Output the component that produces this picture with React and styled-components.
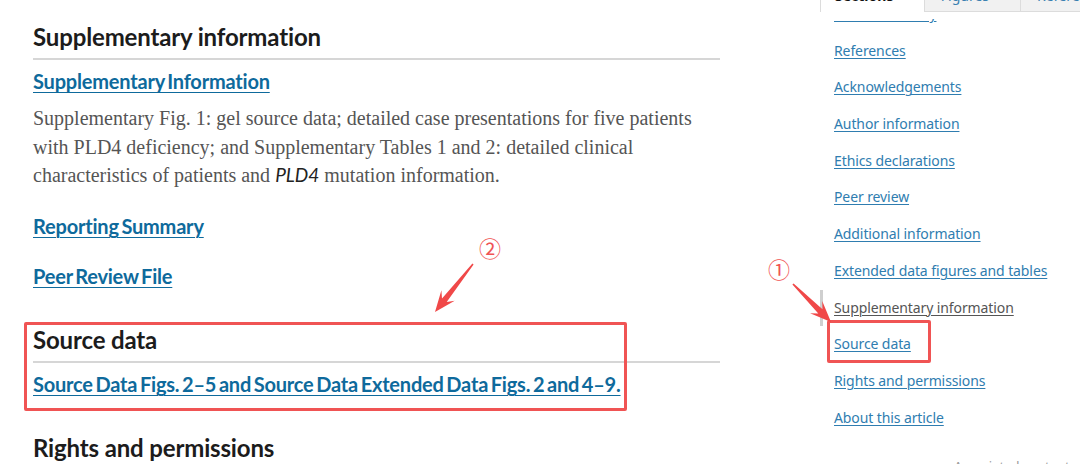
import React from "react";
import styled, { createGlobalStyle } from "styled-components";

const Global = createGlobalStyle`
  html, body { margin: 0; padding: 0; background: #fff; }
  body { width: 1080px; height: 464px; overflow: hidden; }
`;

const Page = styled.div`
  position: relative;
  display: flex;
  width: 1080px;
  height: 464px;
  overflow: hidden;
  background: #fff;
`;

const Main = styled.main`
  width: 687px;
  padding: 23px 0 0 33px;
  display: flex;
  flex-direction: column;
`;

const Heading = styled.h2`
  margin: ${(p) => p.$mt || 0}px 0 0;
  padding: 0 0 7px;
  font-family: Lato, "Liberation Sans", sans-serif;
  font-weight: 700;
  font-size: 24px;
  line-height: 28px;
  color: #1c1c1c;
  letter-spacing: -0.15px;
  border-bottom: ${(p) => (p.$rule ? "2px solid #d6d6d6" : "none")};
`;

const FileLink = styled.a`
  display: block;
  margin-top: ${(p) => p.$mt}px;
  font-family: Lato, "Liberation Sans", sans-serif;
  font-weight: 700;
  font-size: 20px;
  line-height: 24px;
  color: #0e6a9c;
  text-decoration: underline;
  text-decoration-thickness: 1px;
  text-underline-offset: 3px;
  letter-spacing: -0.2px;
  word-spacing: -2px;
  cursor: pointer;
`;

const Desc = styled.p`
  margin: 11px 0 0;
  font-family: "Liberation Serif", "DejaVu Serif", serif;
  font-size: 20px;
  line-height: 28.6px;
  color: #555;
  width: 680px;
`;

const Gene = styled.em`
  font-family: Lato, "Liberation Sans", sans-serif;
  font-style: italic;
  font-weight: 400;
  font-size: 19px;
  color: #222;
`;

const SourceSection = styled.section`
  position: relative;
  margin-top: 38px;
`;

const HighlightBox = styled.div`
  position: absolute;
  left: ${(p) => p.$l}px;
  top: ${(p) => p.$t}px;
  width: ${(p) => p.$w}px;
  height: ${(p) => p.$h}px;
  border: 3px solid #f05454;
  box-sizing: border-box;
  border-radius: 2px;
  pointer-events: none;
`;

const Aside = styled.aside`
  position: relative;
  margin-left: 100px;
  width: 260px;
`;

const TabsCover = styled.div`
  position: absolute;
  top: -18px;
  left: 0;
  right: 0;
  height: 37px;
  z-index: 2;
  background: #fff;
`;

const Tabs = styled.div`
  display: flex;
  height: 30px;
`;

const Tab = styled.div`
  box-sizing: border-box;
  width: ${(p) => p.$w}px;
  height: 30px;
  padding: 4px 0 0 ${(p) => (p.$active ? 14 : 16)}px;
  font-family: "Noto Sans", "Open Sans", sans-serif;
  font-size: 14px;
  font-weight: ${(p) => (p.$active ? 700 : 400)};
  color: ${(p) => (p.$active ? "#111" : "#3a80b0")};
  background: ${(p) => (p.$active ? "#fff" : "#f1f1f1")};
  border-left: 1px solid #dcdcdc;
  border-bottom: ${(p) => (p.$active ? "none" : "1px solid #dcdcdc")};
`;

const NavList = styled.ul`
  list-style: none;
  margin: -4px 0 0;
  padding: 0;
`;

const NavItem = styled.li`
  box-sizing: border-box;
  height: 36.7px;
  padding: 8px 0 0 11px;
  border-left: 3px solid ${(p) => (p.$active ? "#cfcfcf" : "transparent")};
`;

const NavLink = styled.a`
  font-family: "Noto Sans", "Open Sans", sans-serif;
  font-size: 14px;
  line-height: 20px;
  color: ${(p) => (p.$active ? "#555" : "#2f7db0")};
  text-decoration: underline;
  text-decoration-thickness: 1px;
  text-underline-offset: 2px;
  letter-spacing: -0.1px;
  white-space: nowrap;
  cursor: pointer;
`;

const Faint = styled.div`
  margin: 21px 0 0 134px;
  font-family: "Noto Sans", sans-serif;
  font-size: 13px;
  line-height: 18px;
  color: #999;
`;

const Marker = styled.span`
  position: absolute;
  left: ${(p) => p.$x}px;
  top: ${(p) => p.$y}px;
  font-family: "Noto Sans CJK SC", "DejaVu Sans", sans-serif;
  font-size: 22px;
  line-height: 24px;
  color: #f05454;
  pointer-events: none;
`;

const Overlay = styled.svg`
  position: absolute;
  left: 0;
  top: 0;
  pointer-events: none;
`;

function arrowPoints(sx, sy, ex, ey) {
  const dx = ex - sx;
  const dy = ey - sy;
  const len = Math.hypot(dx, dy);
  const ux = dx / len;
  const uy = dy / len;
  const nx = -uy;
  const ny = ux;
  const headLen = 21;
  const neckLen = 15;
  const headW = 8.5;
  const pt = (d, w) => [sx + ux * d + nx * w, sy + uy * d + ny * w];
  const pts = [
    pt(0, 0.8),
    pt(len - neckLen, 3),
    pt(len - headLen, headW),
    pt(len, 0),
    pt(len - headLen, -headW),
    pt(len - neckLen, -3),
    pt(0, -0.8),
  ];
  return pts.map((p) => p.map((v) => v.toFixed(1)).join(",")).join(" ");
}

const navItems = [
  "Data availability",
  "References",
  "Acknowledgements",
  "Author information",
  "Ethics declarations",
  "Peer review",
  "Additional information",
  "Extended data figures and tables",
  "Supplementary information",
  "Source data",
  "Rights and permissions",
  "About this article",
];

export default function App() {
  return (
    <>
      <Global />
      <Page>
        <Main>
          <Heading $rule>Supplementary information</Heading>
          <FileLink $mt={9}>Supplementary Information</FileLink>
          <Desc>
            Supplementary Fig. 1: gel source data; detailed case presentations for five patients
            with PLD4 deficiency; and Supplementary Tables 1 and 2: detailed clinical
            characteristics of patients and <Gene>PLD4</Gene> mutation information.
          </Desc>
          <FileLink $mt={24}>Reporting Summary</FileLink>
          <FileLink $mt={26}>Peer Review File</FileLink>
          <SourceSection>
            <Heading $rule>Source data</Heading>
            <FileLink $mt={9}>
              Source Data Figs. 2–5 and Source Data Extended Data Figs. 2 and 4–9.
            </FileLink>
            <HighlightBox $l={-9} $t={-4} $w={603} $h={89} />
          </SourceSection>
          <Heading $mt={38}>Rights and permissions</Heading>
        </Main>
        <Aside>
          <TabsCover>
            <Tabs>
              <Tab $active $w={117}>Sections</Tab>
              <Tab $w={108}>Figures</Tab>
              <Tab $w={60}>References</Tab>
            </Tabs>
          </TabsCover>
          <NavList>
            {navItems.map((t) => (
              <NavItem key={t} $active={t === "Supplementary information"}>
                <NavLink $active={t === "Supplementary information"}>{t}</NavLink>
              </NavItem>
            ))}
          </NavList>
          <Faint>Associated content</Faint>
          <HighlightBox $l={7} $t={320} $w={104} $h={43} />
        </Aside>
        <Overlay width="1080" height="464" viewBox="0 0 1080 464">
          <polygon points={arrowPoints(473, 264, 435, 312)} fill="#f04848" />
          <polygon points={arrowPoints(793, 284, 831, 322)} fill="#f04848" />
        </Overlay>
        <Marker $x={479} $y={235}>②</Marker>
        <Marker $x={768} $y={256}>①</Marker>
      </Page>
    </>
  );
}
